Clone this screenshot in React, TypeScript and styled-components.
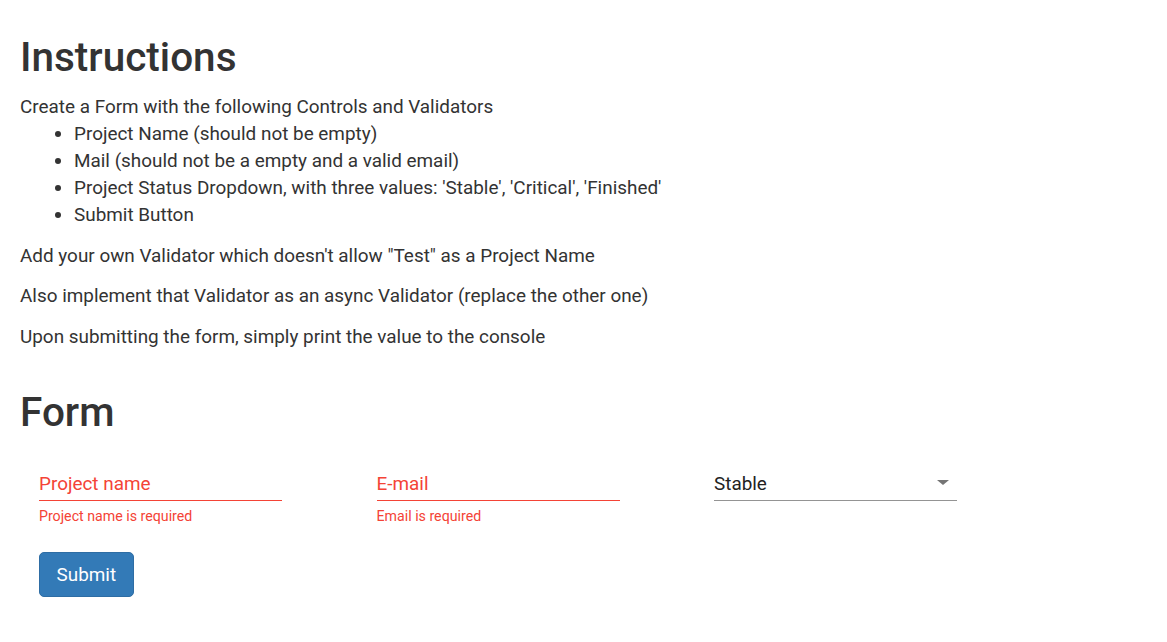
import React from 'react';
import styled, { createGlobalStyle } from 'styled-components';

const GlobalStyle = createGlobalStyle`
   body {
      margin: 8px;
      background: #fff;
      font-family: Roboto, "Helvetica Neue", Arial, sans-serif;
      color: #333;
   }
`;

const Page = styled.div`
   padding: 0 12px 40px 12px;
   font-size: 18.9px;
   line-height: 27px;
`;

const Section = styled.section`
   display: flow-root;
`;

const Title = styled.h1`
   margin: 27px 0 13.5px 0;
   font-size: 40.5px;
   font-weight: 500;
   line-height: 1.1;
   color: #333;
`;

const Text = styled.p<{ $tight?: boolean }>`
   margin: 0 0 ${(p) => (p.$tight ? 0 : 13.5)}px 0;
`;

const List = styled.ul`
   margin: 0 0 13.5px 0;
   padding-left: 54px;
`;

const FormBox = styled.form`
   padding: 21.5px 19px 0 19px;
`;

const Row = styled.div`
   display: flex;
   gap: 94.5px;
`;

const Field = styled.div`
   width: 243px;
`;

const Control = styled.div<{ $error?: boolean }>`
   position: relative;
   padding-bottom: 3.5px;
   line-height: 27px;
   border-bottom: 1px solid ${(p) => (p.$error ? '#f44336' : '#949494')};
   color: ${(p) => (p.$error ? '#f44336' : '#222')};
   font-size: 18.9px;
`;

const Arrow = styled.span`
   position: absolute;
   right: 8px;
   top: 10.5px;
   width: 0;
   height: 0;
   border-left: 6px solid transparent;
   border-right: 6px solid transparent;
   border-top: 5px solid #757575;
`;

const Hint = styled.div`
   margin-top: 5px;
   height: 20px;
   font-size: 14.2px;
   line-height: 20px;
   color: #f44336;
`;

const Button = styled.button`
   display: block;
   margin-top: 25.7px;
   padding: 8.1px 16.5px;
   font-family: inherit;
   font-size: 18.9px;
   line-height: 27px;
   color: #fff;
   background: #337ab7;
   border: 1px solid #2e6da4;
   border-radius: 5px;
   cursor: pointer;
`;

export default function App() {
   return (
      <>
         <GlobalStyle />
         <Page>
            <Section>
               <Title>Instructions</Title>
               <Text $tight>Create a Form with the following Controls and Validators</Text>
               <List>
                  <li>Project Name (should not be empty)</li>
                  <li>Mail (should not be a empty and a valid email)</li>
                  <li>Project Status Dropdown, with three values: 'Stable', 'Critical', 'Finished'</li>
                  <li>Submit Button</li>
               </List>
               <Text>Add your own Validator which doesn't allow "Test" as a Project Name</Text>
               <Text>Also implement that Validator as an async Validator (replace the other one)</Text>
               <Text>Upon submitting the form, simply print the value to the console</Text>
            </Section>

            <Section>
               <Title>Form</Title>
               <FormBox onSubmit={(e) => e.preventDefault()}>
                  <Row>
                     <Field>
                        <Control $error>Project name</Control>
                        <Hint>Project name is required</Hint>
                     </Field>
                     <Field>
                        <Control $error>E-mail</Control>
                        <Hint>Email is required</Hint>
                     </Field>
                     <Field>
                        <Control>
                           Stable
                           <Arrow />
                        </Control>
                     </Field>
                  </Row>
                  <Button type="submit">Submit</Button>
               </FormBox>
            </Section>
         </Page>
      </>
   );
}
